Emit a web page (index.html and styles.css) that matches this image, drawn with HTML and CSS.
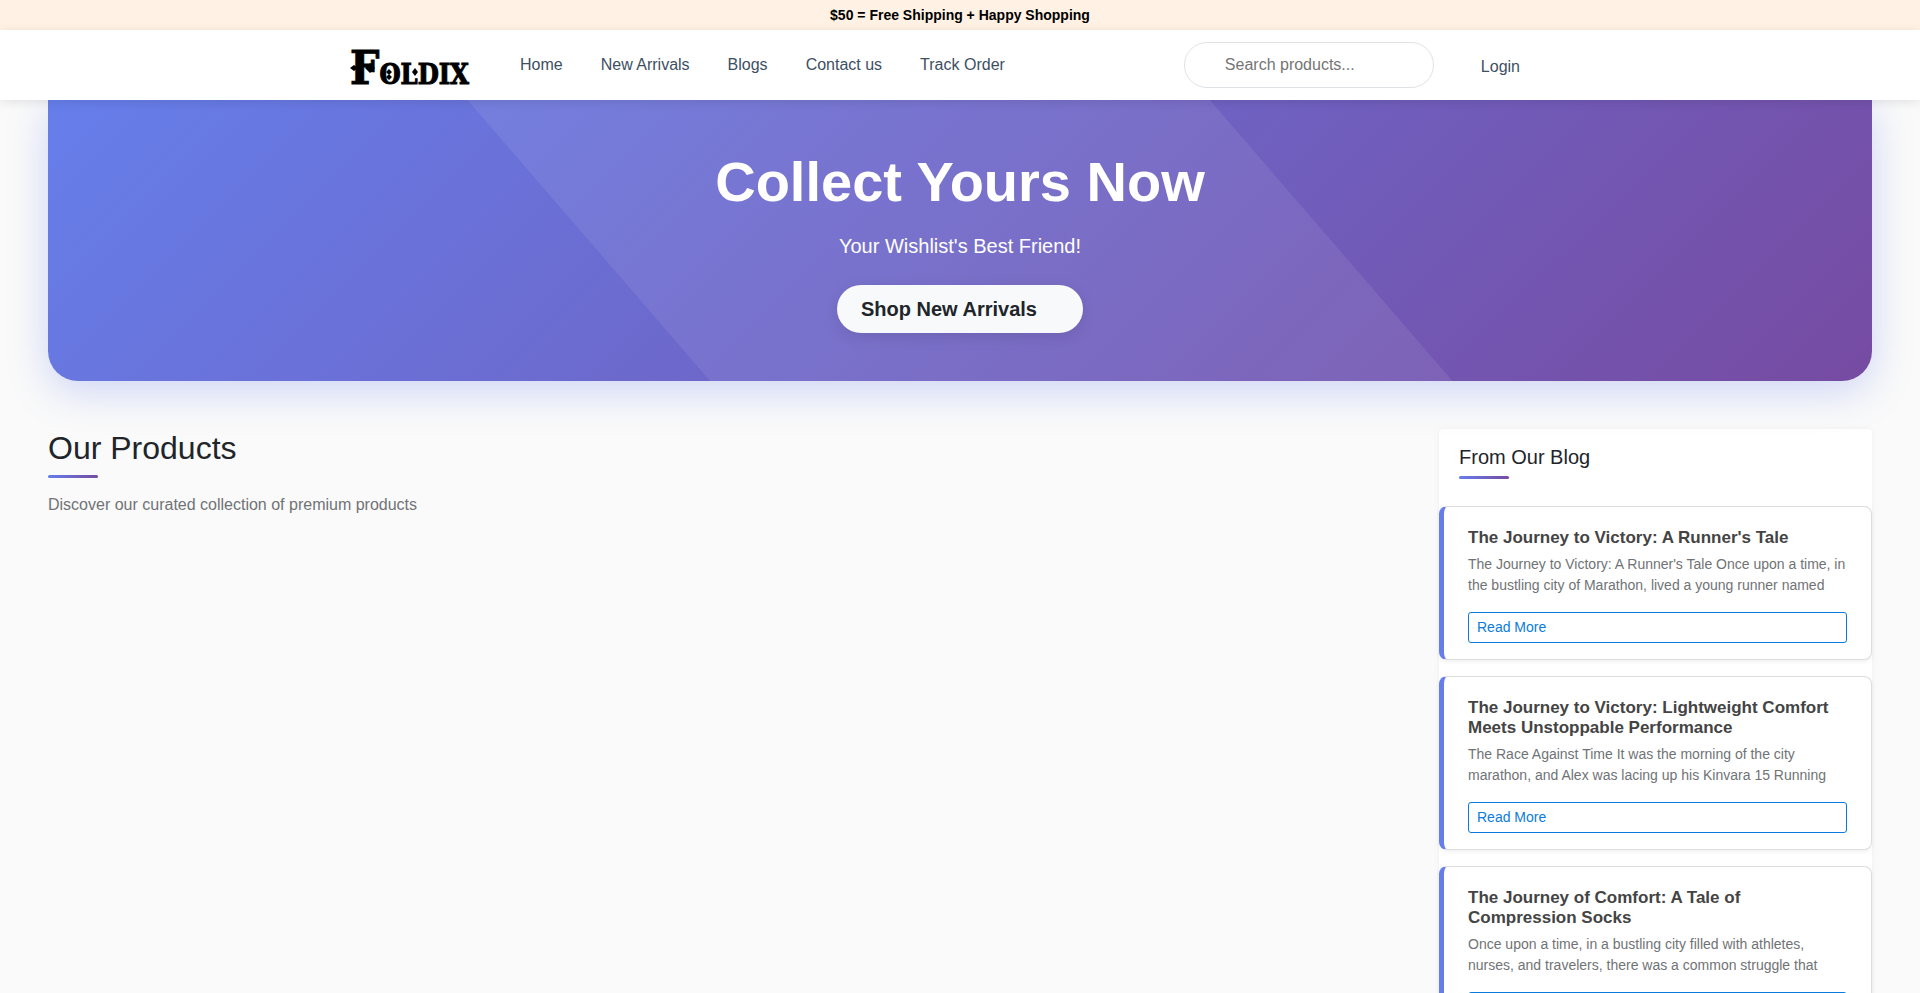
FILE: index.html
```html
<!DOCTYPE html>
<html lang="en">
<head>
  <meta charset="UTF-8">
  <meta name="viewport" content="width=device-width, initial-scale=1.0">
  <title>Foldix</title>
  <link rel="stylesheet" href="styles.css">
</head>
<body>
  <div class="promo-bar">$50 = Free Shipping + Happy Shopping</div>

  <header class="site-header">
    <div class="header-inner">
      <a class="logo" href="#" aria-label="Foldix">
        <svg width="120" height="60" viewBox="0 0 120 60">
          <text class="logo-text" x="0" y="49"><tspan class="logo-initial">F</tspan>OLDIX</text>
          <path d="M0 33l4-3 4 3-4 3zM15 33l5-5 5 5-5 5zM36 37l3-3 3 3-3 3zM36 42l3-3 3 3-3 3zM62 37l3-4 3 4-3 4z"/>
        </svg>
      </a>
      <nav class="main-nav">
        <a href="#">Home</a>
        <a href="#">New Arrivals</a>
        <a href="#">Blogs</a>
        <a href="#">Contact us</a>
        <a href="#">Track Order</a>
      </nav>
      <form class="search">
        <input type="search" placeholder="Search products..." aria-label="Search products">
      </form>
      <a class="login" href="#">Login</a>
    </div>
  </header>

  <section class="hero">
    <h1>Collect Yours Now</h1>
    <p>Your Wishlist's Best Friend!</p>
    <a class="hero-btn" href="#">Shop New Arrivals</a>
  </section>

  <div class="content">
    <main class="products">
      <h2 class="underlined">Our Products</h2>
      <p>Discover our curated collection of premium products</p>
    </main>

    <aside class="blog">
      <h3 class="underlined">From Our Blog</h3>

      <article class="blog-card">
        <h4>The Journey to Victory: A Runner's Tale</h4>
        <p>The Journey to Victory: A Runner's Tale Once upon a time, in the bustling city of Marathon, lived a young runner named</p>
        <a href="#">Read More</a>
      </article>

      <article class="blog-card">
        <h4>The Journey to Victory: Lightweight Comfort Meets Unstoppable Performance</h4>
        <p>The Race Against Time It was the morning of the city marathon, and Alex was lacing up his Kinvara 15 Running</p>
        <a href="#">Read More</a>
      </article>

      <article class="blog-card">
        <h4>The Journey of Comfort: A Tale of Compression Socks</h4>
        <p>Once upon a time, in a bustling city filled with athletes, nurses, and travelers, there was a common struggle that</p>
        <a href="#">Read More</a>
      </article>
    </aside>
  </div>
</body>
</html>
```
FILE: styles.css
```css
* {
  box-sizing: border-box;
}
body {
  margin: 0;
  background: #fafafa;
  color: #212529;
  font-family: "Liberation Sans", Arial, sans-serif;
  font-size: 16px;
  line-height: 24px;
}
h1, h2, h3, h4, p {
  margin: 0;
}
a {
  text-decoration: none;
}

/* Header */
.promo-bar {
  padding: 3px 16px;
  background: #fff2e4;
  color: #000;
  font-size: 14px;
  font-weight: bold;
  text-align: center;
}
.site-header {
  position: sticky;
  top: 0;
  z-index: 10;
  background: #fff;
  box-shadow: 0 2px 10px rgba(0, 0, 0, 0.1);
}
.header-inner {
  display: flex;
  align-items: center;
  max-width: 1220px;
  min-height: 70px;
  margin: 0 auto;
}
.logo {
  display: flex;
  margin-right: 50px;
}
.logo svg {
  overflow: visible;
}
.logo-text {
  font-family: "DejaVu Serif Condensed", "DejaVu Serif", serif;
  font-size: 27px;
  font-weight: bold;
  stroke: #000;
}
.logo-initial {
  font-size: 46px;
}
.main-nav {
  display: flex;
  gap: 38px;
}
.main-nav a,
.login {
  color: #3d4f63;
}
.search {
  margin-left: auto;
}
.search input {
  width: 250px;
  height: 46px;
  padding: 0 40px;
  border: 1px solid #dfe3e6;
  border-radius: 24px;
  background: #fff;
  font: inherit;
}
.search input::placeholder {
  color: #757575;
}
.login {
  margin: 4px 50px 0 47px;
}

/* Hero */
.hero {
  position: relative;
  margin: 0 48px 48px;
  padding: 48px;
  border-radius: 0 0 30px 30px;
  background: linear-gradient(135deg, #667eea 0%, #764ba2 100%);
  box-shadow: 0 10px 40px rgba(102, 126, 234, 0.3);
  color: #fff;
  text-align: center;
}
.hero::before {
  content: "";
  position: absolute;
  inset: 0;
  background: rgba(255, 255, 255, 0.08);
  clip-path: polygon(23% 0, 63.7% 0, 77% 100%, 36.3% 100%);
}
.hero > * {
  position: relative;
}
.hero h1 {
  margin-bottom: 16px;
  font-size: 56px;
  line-height: 67px;
}
.hero p {
  margin-bottom: 24px;
  font-size: 20px;
  line-height: 30px;
}
.hero-btn {
  display: inline-block;
  padding: 9px 46px 9px 24px;
  border-radius: 24px;
  background: #f8f9fa;
  box-shadow: 0 4px 15px rgba(0, 0, 0, 0.1);
  color: #212529;
  font-size: 20px;
  font-weight: bold;
  line-height: 30px;
  vertical-align: top;
}

/* Products and blog */
.content {
  display: grid;
  grid-template-columns: 3fr 1fr;
  gap: 92px;
  margin: 0 48px;
}
.underlined {
  font-weight: normal;
}
.underlined::after {
  content: "";
  display: block;
  width: 50px;
  height: 3px;
  margin-top: 7px;
  border-radius: 2px;
  background: linear-gradient(90deg, #667eea, #764ba2);
}
.products h2 {
  margin-bottom: 15px;
  font-size: 32px;
  line-height: 39px;
}
.products p {
  color: #707376;
}
.blog {
  background: #fff;
  border-radius: 4px;
  box-shadow: 0 0 6px rgba(0, 0, 0, 0.05);
}
.blog h3 {
  padding: 16px 20px 27px;
  font-size: 20px;
  line-height: 24px;
}
.blog-card {
  margin-bottom: 16px;
  padding: 21px 24px 16px;
  border: 1px solid #ddd;
  border-left: 5px solid #667eea;
  border-radius: 8px;
  background: #fff;
  box-shadow: 0 2px 4px rgba(0, 0, 0, 0.06);
}
.blog-card h4 {
  margin-bottom: 6px;
  color: #444;
  font-size: 17px;
  line-height: 20px;
}
.blog-card p {
  margin-bottom: 16px;
  color: #707376;
  font-size: 14px;
  line-height: 21px;
}
.blog-card a {
  display: block;
  padding: 4px 8px;
  border: 1px solid #0a7bdc;
  border-radius: 3px;
  color: #0a7bdc;
  font-size: 14px;
  line-height: 21px;
}
```
